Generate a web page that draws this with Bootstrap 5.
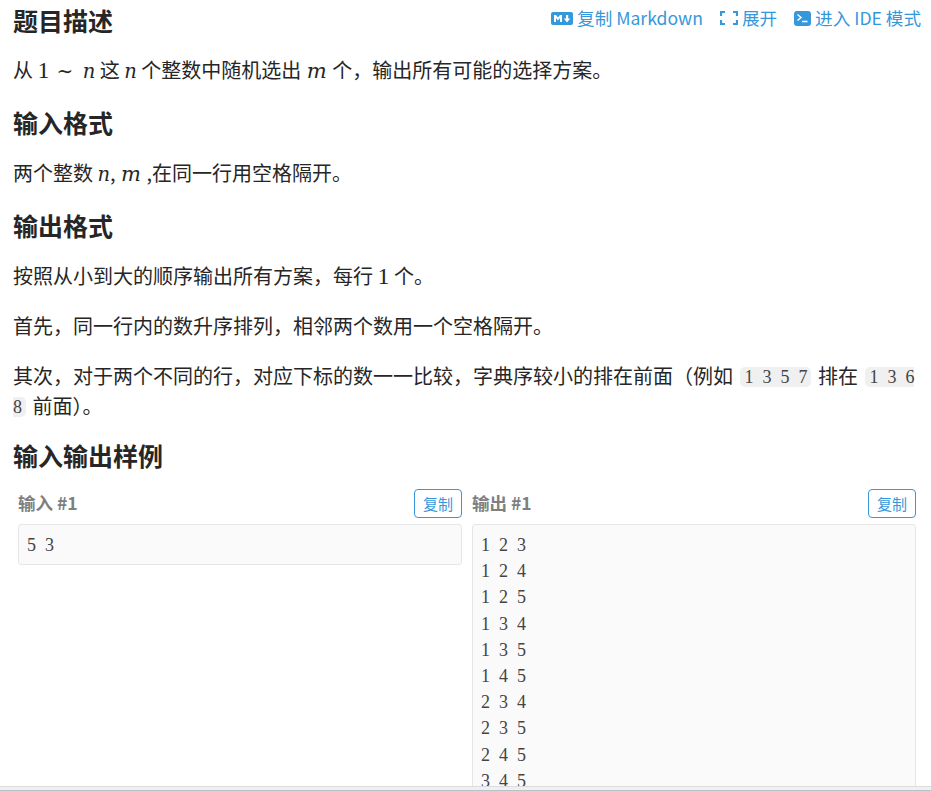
<!DOCTYPE html>
<html lang="zh-CN">
<head>
<meta charset="utf-8">
<title>题目描述</title>
<link href="https://cdn.jsdelivr.net/npm/bootstrap@5.3.0/dist/css/bootstrap.min.css" rel="stylesheet">
<style>
html,body{height:791px;overflow:hidden;background:#fff}
body{font-family:"Noto Sans CJK SC","Noto Sans",sans-serif;font-size:20px;line-height:30px;color:#262626}
.pg{height:786px;overflow:hidden;padding:1px 10px 0 13px}
.tt{font-size:25px;font-weight:700;line-height:38px;margin:0;color:#262626}
.sub{font-size:25px;font-weight:700;line-height:38px;margin:0 0 17px;color:#262626}
.acts{gap:17px;font-size:17.6px;line-height:20px;color:#3498db;padding-top:7px}
.act{display:flex;align-items:center;white-space:nowrap}
.txt{margin:0 5px 18px 0}
.tt-gap{margin-bottom:16px}
.txt-same{margin-bottom:20px}
.mi{font-family:"DejaVu Serif",serif;font-style:italic;font-size:19.5px;line-height:1}
.mm{font-size:21px;margin:0 1px}
.mn{font-family:"Liberation Serif",serif;font-size:24px;line-height:1}
.op{font-family:"DejaVu Serif",serif;font-size:20px;line-height:1;margin:0 5px 0 7px}
.cd{font-family:"Liberation Serif",serif;font-size:18px;line-height:1;vertical-align:1.5px;word-spacing:4.5px;background:#f0f0f0;border-radius:5px;padding:0 4px;margin:0 2px 0 3px;color:#444}
.lastp{margin-bottom:15px}
.sub-s{margin-bottom:15px}
.smp{gap:10px;padding-left:5px}
.cl{width:444px}
.lbl{font-size:17.5px;font-weight:700;color:#7f7f7f;line-height:20px;margin-bottom:2px}
.cp{font-size:15px;line-height:21px;padding:3px 8px;border:1px solid #3498db;border-radius:4px;color:#3498db;background:#fff}
.bx{margin:6px 0 0;background:#fafafa;border:1px solid #e6e6e6;border-radius:3px;padding:7px 8px 6px;font-family:"Liberation Serif",serif;font-size:18px;line-height:26.2px;word-spacing:4.5px;color:#444}
.bar{height:5px;background:#f0f0f0;border-top:1px solid #dcdcdc;border-bottom:1px solid #b4c4c8}
</style>
</head>
<body>
<div class="pg">
  <div class="d-flex justify-content-between tt-gap">
    <h2 class="tt">题目描述</h2>
    <div class="acts d-flex align-items-start">
      <span class="act"><svg class="me-1" width="22" height="13" viewBox="0 0 22 13"><rect width="22" height="13" rx="2" fill="#3498db"/><path d="M3 10V3h2l2 2.600L9 3h2v7H9V6L7 8.500 5 6v4zM15 3h2.200v3.500h2L16 10.500 12.800 6.500h2.200z" fill="#fff"/></svg>复制 Markdown</span>
      <span class="act"><svg class="me-1" width="18" height="14" viewBox="0 0 18 14"><path d="M1 5V1h4M13 1h4v4M17 9v4h-4M5 13H1V9" fill="none" stroke="#3498db" stroke-width="2.200"/></svg>展开</span>
      <span class="act"><svg class="me-1" width="17" height="15" viewBox="0 0 17 15"><rect width="17" height="15" rx="3" fill="#3498db"/><path d="M3.500 3.500l3.500 3-3.500 3M8 10.500h5.500" fill="none" stroke="#fff" stroke-width="1.500"/></svg>进入 IDE 模式</span>
    </div>
  </div>
  <p class="txt">从 <span class="mn">1</span><span class="op">∼</span> <span class="mi">n</span> 这 <span class="mi">n</span> 个整数中随机选出 <span class="mi mm">m</span> 个，输出所有可能的选择方案。</p>
  <h3 class="sub">输入格式</h3>
  <p class="txt">两个整数 <span class="mi">n</span>, <span class="mi mm">m</span> ,在同一行用空格隔开。</p>
  <h3 class="sub">输出格式</h3>
  <p class="txt txt-same">按照从小到大的顺序输出所有方案，每行 <span class="mn">1</span> 个。</p>
  <p class="txt txt-same">首先，同一行内的数升序排列，相邻两个数用一个空格隔开。</p>
  <p class="txt lastp">其次，对于两个不同的行，对应下标的数一一比较，字典序较小的排在前面（例如 <code class="cd">1 3 5 7</code> 排在 <code class="cd">1 3 6 8</code> 前面）。</p>
  <h3 class="sub sub-s">输入输出样例</h3>
  <div class="smp d-flex align-items-start">
    <div class="cl">
      <div class="d-flex justify-content-between align-items-center"><span class="lbl">输入 #1</span><button class="cp">复制</button></div>
      <pre class="bx">5 3</pre>
    </div>
    <div class="cl">
      <div class="d-flex justify-content-between align-items-center"><span class="lbl">输出 #1</span><button class="cp">复制</button></div>
      <pre class="bx">1 2 3
1 2 4
1 2 5
1 3 4
1 3 5
1 4 5
2 3 4
2 3 5
2 4 5
3 4 5
</pre>
    </div>
  </div>
</div>
<div class="bar"></div>
<script src="https://cdn.jsdelivr.net/npm/bootstrap@5.3.0/dist/js/bootstrap.bundle.min.js"></script>
</body>
</html>
